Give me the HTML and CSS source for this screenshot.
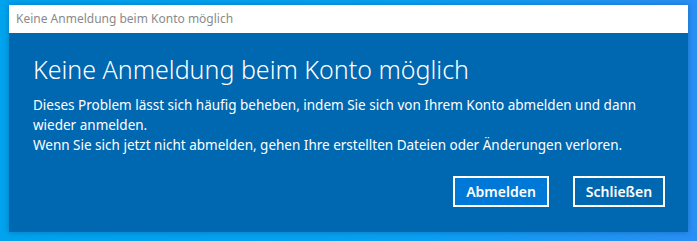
FILE: index.html
```html
<!DOCTYPE html>
<html lang="de">
<head>
<meta charset="utf-8">
<title>Keine Anmeldung beim Konto möglich</title>
<link rel="stylesheet" href="styles.css">
</head>
<body>
<div class="desktop">
  <div class="window">
    <div class="titlebar">Keine Anmeldung beim Konto möglich</div>
    <div class="content">
      <h1 class="heading">Keine Anmeldung beim Konto möglich</h1>
      <p class="message">Dieses Problem lässt sich häufig beheben, indem Sie sich von Ihrem Konto abmelden und dann wieder anmelden.<br>Wenn Sie sich jetzt nicht abmelden, gehen Ihre erstellten Dateien oder Änderungen verloren.</p>
      <div class="actions">
        <button class="btn btn-primary">Abmelden</button>
        <button class="btn btn-secondary">Schließen</button>
      </div>
    </div>
  </div>
</div>
</body>
</html>
```
FILE: styles.css
```css
html, body {
  margin: 0;
  padding: 0;
}
body {
  width: 697px;
  height: 241px;
  overflow: hidden;
  font-family: "Noto Sans", "Open Sans", sans-serif;
}
.desktop {
  width: 697px;
  height: 241px;
  box-sizing: border-box;
  padding: 5px 0 0 9px;
  background: linear-gradient(90deg, #00a3ee 0%, #0aa0f2 60%, #2a8ff5 100%);
}
.window {
  width: 679px;
  box-shadow: 0 0 6px rgba(0, 40, 90, 0.35);
}
.titlebar {
  height: 28px;
  line-height: 28px;
  background: #ffffff;
  color: #8a8a8a;
  font-size: 12px;
  padding-left: 7px;
}
.content {
  height: 199px;
  box-sizing: border-box;
  background: #0067b1;
  color: #ffffff;
  padding: 20px 23px 0 24px;
  display: flex;
  flex-direction: column;
}
.heading {
  margin: 0;
  font-weight: 300;
  font-size: 25px;
  line-height: 32px;
}
.message {
  margin: 10px 0 0 0;
  padding-right: 9px;
  font-size: 13.5px;
  line-height: 20px;
}
.actions {
  display: flex;
  justify-content: flex-end;
  gap: 24px;
  margin-top: 21px;
}
.btn {
  height: 31px;
  box-sizing: border-box;
  border: 2px solid #ffffff;
  background: transparent;
  color: #ffffff;
  font-family: inherit;
  font-size: 14px;
  font-weight: 600;
  padding: 0;
}
.btn-primary {
  width: 96px;
  background: #0078d7;
}
.btn-secondary {
  width: 92px;
}
```
